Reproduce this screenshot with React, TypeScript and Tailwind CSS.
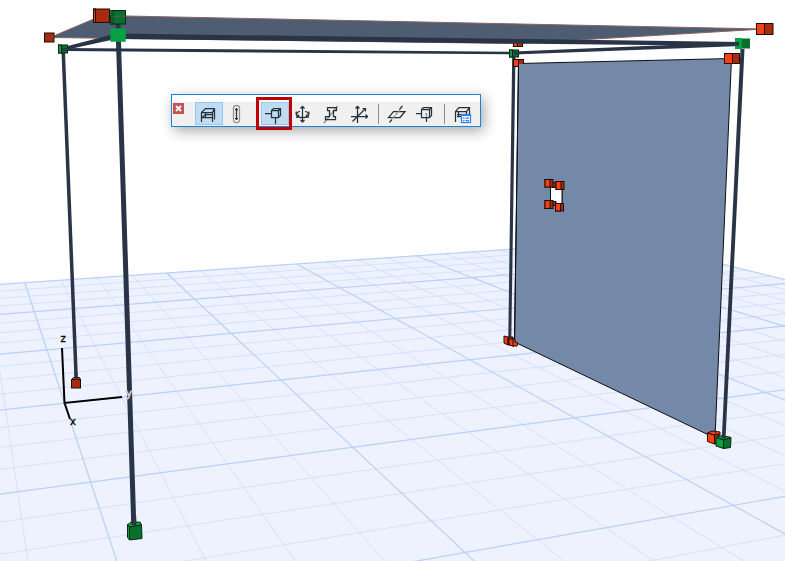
import React from "react";
import clsx from "clsx";

type Point = [number, number];

const DARK = "#293447";

// Perspective floor: four known grid nodes define the projection
const P00: Point = [24.7, 282.7];
const P10: Point = [296.7, 264];
const P11: Point = [574.7, 417.7];
const P01: Point = [90.7, 482];

const dx1 = P10[0] - P11[0];
const dx2 = P01[0] - P11[0];
const sx = P00[0] - P10[0] + P11[0] - P01[0];
const dy1 = P10[1] - P11[1];
const dy2 = P01[1] - P11[1];
const sy = P00[1] - P10[1] + P11[1] - P01[1];
const den = dx1 * dy2 - dy1 * dx2;
const g = (sx * dy2 - sy * dx2) / den;
const h = (dx1 * sy - dy1 * sx) / den;

function project(col: number, row: number): Point {
    const u = col / 8;
    const v = row / 16;
    const w = 1 + g * u + h * v;
    const x = (P10[0] - P00[0] + g * P10[0]) * u + (P01[0] - P00[0] + h * P01[0]) * v + P00[0];
    const y = (P10[1] - P00[1] + g * P10[1]) * u + (P01[1] - P00[1] + h * P01[1]) * v + P00[1];
    return [x / w, y / w];
}

const COL_MIN = -4;
const COL_MAX = 20;
const ROW_MAX = 28;

function Floor() {
    const corners = [project(COL_MIN, 0), project(COL_MAX, 0), project(COL_MAX, ROW_MAX), project(COL_MIN, ROW_MAX)];
    const lines: { a: Point; b: Point; major: boolean }[] = [];
    for (let c = COL_MIN; c <= COL_MAX; c++) {
        lines.push({ a: project(c, 0), b: project(c, ROW_MAX), major: c % 4 === 0 });
    }
    for (let r = 0; r <= ROW_MAX; r++) {
        lines.push({ a: project(COL_MIN, r), b: project(COL_MAX, r), major: r % 4 === 0 });
    }
    lines.sort((l, m) => Number(l.major) - Number(m.major));

    return (
        <g>
            <polygon points={corners.join(" ")} fill="#edf2fe" />
            {lines.map(({ a, b, major }, i) => (
                <line key={i} x1={a[0]} y1={a[1]} x2={b[0]} y2={b[1]} stroke={major ? "#b8d0fb" : "#d5e1fb"} strokeWidth={major ? 1.2 : 1} />
            ))}
        </g>
    );
}

type CubeProps = { x: number; y: number; w: number; h: number; split?: number; top?: number; color?: "red" | "green"; edge?: string };

// Node marker: bright left face, dark right face, optional top face
function Cube({ x, y, w, h, split = 0, top = 0, color = "red", edge = "#1c0d08" }: CubeProps) {
    const light = color === "red" ? "#fd3f12" : "#07a044";
    const dark = color === "red" ? "#a92b0f" : "#08702f";
    return (
        <g stroke={edge} strokeWidth={1}>
            <rect x={x} y={y} width={w} height={h} fill={dark} />
            {split > 0 && <rect x={x} y={y} width={split} height={h} fill={light} />}
            {top > 0 && <polygon points={`${x},${y} ${x + 2},${y - top} ${x + w - 1},${y - top} ${x + w},${y}`} fill={light} />}
        </g>
    );
}

function Scene() {
    return (
        <svg viewBox="0 0 785 561" className="block h-auto w-full" role="img" aria-label="3D structural model">
            <Floor />

            {/* wall */}
            <path
                d="M518.5 63.5 731.5 58.5 715 438 514.5 342ZM550.5 186.5V203.5H562V187Z"
                fill="#7489a8"
                fillRule="evenodd"
                stroke="#0c0f14"
                strokeWidth={1}
            />
            <rect x={551} y={187} width={11} height={17} fill="#fff" />
            <path d="M518.5 63.5 514.5 342M550.5 187V204M562 187V204" stroke="#0c0f14" />

            {/* slab */}
            <polygon points="50,37.5 102,15.5 765,29 518,43.5" fill="#4f5d73" stroke="#8a6460" strokeWidth={1} />

            {/* marker lying behind the beams */}
            <Cube x={513.5} y={40.5} w={9} h={6} split={4} />

            {/* beams and columns */}
            <g fill={DARK}>
                <polygon points="62,47.5 116,33.5 118,38.5 63,50.5" />
                <polygon points="63,48 514,51.7 514,54.3 63,51" />
                <polygon points="514,51.5 742,42 742,46 514,54.5" />
                <polygon points="118,33.5 742,42 742,46 118,39" />
                <polygon points="61.5,52 65,52 78,380 74.5,380" />
                <polygon points="512.2,55 515.5,55 511.3,338 508.3,338" />
            </g>
            <path d="M117.8 20 133.8 526" stroke={DARK} strokeWidth={5} />

            {/* red nodes */}
            <rect x={44.5} y={33} width={9.5} height={9} fill="#a92b0f" stroke="#1c0d08" />
            <path d="M49 38.5 54 36.5" stroke="#7b4a38" />
            <Cube x={93.5} y={9} w={16} h={13.5} split={2} />
            <Cube x={756.5} y={23.5} w={16.5} h={11} split={8} />
            <path d="M757 29H763" stroke="#a35a4a" />
            <Cube x={513.5} y={59.5} w={10} h={7} split={5} />
            <rect x={519} y={64} width={5} height={4} fill="#7489a8" />
            <Cube x={724.5} y={53.5} w={15} h={10} split={8} />
            <Cube x={71.5} y={379.5} w={9} h={8.5} top={2} />

            <rect x={552} y={182.5} width={5} height={5} fill="#a92b0f" stroke="#1c0d08" />
            <rect x={552} y={201.5} width={4} height={4} fill="#a92b0f" stroke="#1c0d08" />
            <Cube x={545} y={179.5} w={8} h={7.5} split={5} />
            <Cube x={556} y={181.5} w={8} h={8} split={5} />
            <Cube x={545} y={200.5} w={8} h={8} split={5} />
            <Cube x={555.5} y={203.5} w={8} h={7.5} split={5} />

            <g stroke="#1c0d08" strokeWidth={1}>
                <polygon points="504,336 508,337 508,345 504,343" fill="#fd3f12" />
                <polygon points="508,337 513,337 513,345 508,345" fill="#a92b0f" />
                <polygon points="509,339 513.5,339 513.5,346.5 509,344.5" fill="#fd3f12" />
                <polygon points="513,339 515,339 515,342 518,343 517,346 513,346" fill="#fd3f12" />
                <polygon points="707.5,433 714.5,435 714.5,444 707.5,441.5" fill="#fd3f12" />
                <polygon points="707.5,433 712,431 720,432 720,435 714.5,435" fill="#fd3f12" />
                <polygon points="714.5,435 719,434 719,443 714.5,444" fill="#a92b0f" />
            </g>
            <path d="M715.3 428V436" stroke={DARK} />

            {/* green nodes */}
            <Cube x={111} y={10.5} w={14.5} h={13.5} split={2} color="green" edge="#06280f" />
            <path d="M113 16.3H126" stroke="#6e513f" />
            <Cube x={111} y={29} w={14} h={12} split={14} color="green" edge="#07a044" />
            <Cube x={58.5} y={45} w={9} h={8} split={3} color="green" edge="#06280f" />
            <path d="M62 49.3H68" stroke={DARK} strokeWidth={2.5} />
            <Cube x={509.5} y={50} w={9} h={7} split={3} color="green" edge="#06280f" />
            <path d="M514 53H520" stroke={DARK} strokeWidth={2.5} />
            <rect x={735} y={38} width={7} height={11} fill="#07a044" />
            <rect x={742} y={38.5} width={8} height={10} fill="#08702f" />
            <path d="M730 43.8H739" stroke={DARK} strokeWidth={3.5} />
            <g stroke="#06280f" strokeWidth={1}>
                <polygon points="127.5,525 130,522.5 140,522 141.5,525 129.5,527" fill="#07a044" />
                <polygon points="127.5,524.5 129.5,527 129.5,540 127.5,537.5" fill="#07a044" />
                <polygon points="129.5,527 141.5,525 142,538.5 129.5,540" fill="#08702f" />
                <polygon points="716,437.5 722,435.5 731,437.5 724,440" fill="#07a044" />
                <polygon points="716,437.5 723.5,440 723.5,448.5 716,446" fill="#07a044" />
                <polygon points="723.5,440 731,437.5 730.5,447.5 723.5,448.5" fill="#08702f" />
            </g>
            <polygon points="740.5,49 744.5,49 725.5,439 721.8,438" fill={DARK} />
            <path d="M133.6 515 134 525" stroke={DARK} strokeWidth={5} />
            <path d="M75.8 372 76.2 380" stroke={DARK} strokeWidth={3} />

            {/* axes */}
            <path d="M62 348 64.5 403 122 397M64.5 403 70 419" fill="none" stroke="#000" strokeWidth={2} />
            <g fontFamily="'DejaVu Sans', sans-serif" fontSize={10} textAnchor="middle" stroke="#000" strokeWidth={0.3}>
                <text x={63} y={342}>z</text>
                <text x={73} y={425}>x</text>
                <text x={129} y={397} fill="#000" stroke="#c9ced6" strokeWidth={0.8}>y</text>
            </g>
        </svg>
    );
}

const icons: Record<string, React.ReactNode> = {
    structure: (
        <>
            <path d="M6.5 20V10.5L10.5 6.5H19.5V17.5M17.5 20V10.5H6.5M17.5 10.5 19.5 6.5" />
            <path d="M7 15.5 10.5 12.5H17M7 15.5H17M10.5 11V16" />
        </>
    ),
    member: (
        <>
            <rect x={10.5} y={3.5} width={6} height={17} rx={2.5} stroke="#8b9295" />
            <path d="M13.5 6V18M12 7.5H15M12 16.5H15" />
        </>
    ),
    node: (
        <path d="M4 11.5H10M10.5 8.5H17.5V15.5H10.5ZM10.5 8.5 12.5 6.5H19.5V13.5L17.5 15.5M17.5 8.5 19.5 6.5M14.5 16V22" />
    ),
    rotate: (
        <>
            <path d="M13.5 4V20M11.5 6.5 13.5 4.5 15.5 6.5M11.5 18 13.5 20 15.5 18" />
            <path d="M11 9.5C7 10 6.5 13.5 9.5 14.8C12 15.8 15 15.8 17.5 14.8C20.5 13.5 20 10 16 9.5M7.2 9.5V13M9.5 12.5V15H7M19.8 9.5V13M17.5 12.5V15H20" />
        </>
    ),
    section: (
        <>
            <path d="M7 21 20.5 4" stroke="#8b9295" />
            <path d="M10.5 8.5V5.5H19.5V8.5H16.5V14.5H18.5V17.5H8.5V14.5H12.5V8.5Z" />
        </>
    ),
    axes: (
        <>
            <path d="M12.5 4V21M6 14.5H23M7.5 19.5 20.5 6.5" />
            <path d="M10.5 6.5 12.5 4.5 14.5 6.5M20.5 12.5 22.5 14.5 20.5 16.5M17.5 6.5H20.5V9.5" />
        </>
    ),
    plane: (
        <>
            <path d="M10.5 9.5H22L17 15.5H5.5Z" />
            <path d="M10 16 17 8" stroke="#8b9295" strokeDasharray="3 1" />
            <path d="M6.5 20.5 9 17.5M16.5 7.5 19.5 4" />
        </>
    ),
    support: (
        <>
            <path d="M14 11.5H15.5V15" stroke="#8b9295" />
            <path d="M5 11.5H10M10.5 7.5H18.5V15.5H10.5ZM10.5 7.5 12.5 5.5H20.5V13.5L18.5 15.5M18.5 7.5 20.5 5.5M15.5 15.5V20" />
        </>
    ),
    report: (
        <>
            <path d="M6.5 20V9.5L10 5.5H20.5V12M6.5 9.5H17.5V12M17.5 9.5 20.5 5.5M8 12.5H15M8 14.5H12M9.5 10V15" />
            <rect x={12.5} y={12.5} width={9} height={8} fill="#fff" stroke="#2f7df6" />
            <path d="M12 13H22" stroke="#2f7df6" strokeWidth={2} />
            <path d="M14 16H15.5M16.5 16H20M14 18.5H15.5M16.5 18.5H20" stroke="#2f7df6" />
        </>
    ),
};

type ToolProps = { icon: string; label: string; active?: boolean; marked?: boolean };

function Tool({ icon, label, active, marked }: ToolProps) {
    return (
        <button
            type="button"
            aria-label={label}
            aria-pressed={!!active}
            className={clsx("relative h-[23px] w-7 shrink-0", active && "bg-[#c0dcf3] outline outline-1 -outline-offset-1 outline-[#90c8f6]")}
        >
            <svg viewBox="0 0 28 23" className="block h-[23px] w-7" fill="none" stroke="#263238" strokeWidth={1.25}>
                {icons[icon]}
            </svg>
            {marked && <span className="pointer-events-none absolute -top-[5px] -left-[5px] h-[33px] w-9 border-3 border-[#c00000]" />}
        </button>
    );
}

function Separator() {
    return (
        <div className="flex h-[23px] w-[10px] items-center justify-center">
            <span className="h-5 w-px bg-[#8c8c8c]" />
        </div>
    );
}

function Toolbar() {
    return (
        <div
            role="toolbar"
            aria-label="Selection filter"
            className="absolute top-[94px] left-[171px] border border-[#1f83d3] bg-white pt-[7px] shadow-[3px_4px_14px_rgba(0,0,0,0.35)]"
        >
            <div className="flex items-start bg-[#f0f0f0] pr-[3px] pb-px pl-px">
                <button type="button" aria-label="Close" className="mt-px mr-[11px] flex size-[11px] items-center justify-center bg-[#c75050]">
                    <svg viewBox="0 0 11 11" className="size-[11px]" stroke="#fff" strokeWidth={2}>
                        <path d="M3 3 8 8M8 3 3 8" />
                    </svg>
                </button>
                <Tool icon="structure" label="Structure" active />
                <Tool icon="member" label="Member" />
                <Separator />
                <Tool icon="node" label="Node" active marked />
                <Tool icon="rotate" label="Rotation" />
                <Tool icon="section" label="Section" />
                <Tool icon="axes" label="Axes" />
                <Separator />
                <Tool icon="plane" label="Plane" />
                <Tool icon="support" label="Support" />
                <Separator />
                <Tool icon="report" label="Report" />
            </div>
        </div>
    );
}

export default function App() {
    return (
        <main className="relative w-full overflow-hidden bg-white">
            <Scene />
            <Toolbar />
        </main>
    );
}
